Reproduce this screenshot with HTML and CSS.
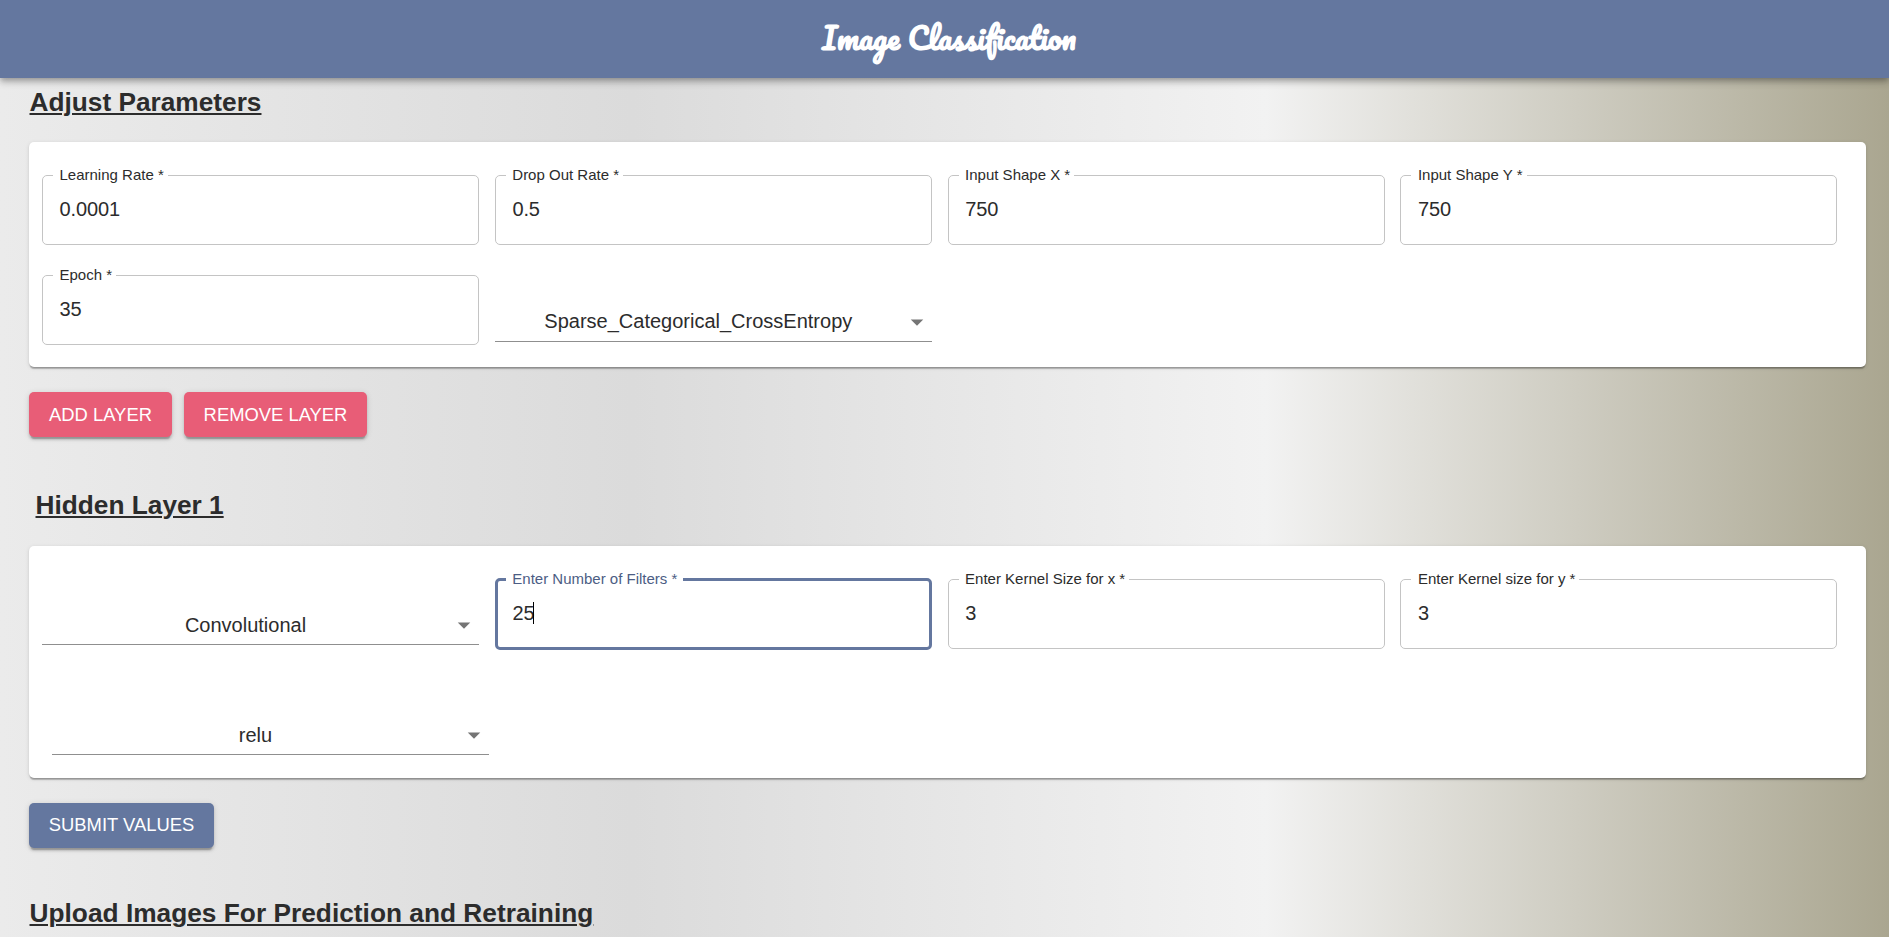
FILE: index.html
```html
<!DOCTYPE html>
<html lang="en">
<head>
<meta charset="utf-8">
<title>Image Classification</title>
<link rel="stylesheet" href="styles.css">
</head>
<body>
<header class="appbar"><h1 class="brand">Image Classification</h1></header>
<main class="page">
  <h2 class="heading">Adjust Parameters</h2>
  <section class="card card-params">
    <fieldset class="field"><legend>Learning Rate&nbsp;*</legend><div class="value">0.0001</div></fieldset>
    <fieldset class="field"><legend>Drop Out Rate&nbsp;*</legend><div class="value">0.5</div></fieldset>
    <fieldset class="field"><legend>Input Shape X&nbsp;*</legend><div class="value">750</div></fieldset>
    <fieldset class="field"><legend>Input Shape Y&nbsp;*</legend><div class="value">750</div></fieldset>
    <fieldset class="field"><legend>Epoch&nbsp;*</legend><div class="value">35</div></fieldset>
    <div class="select select-loss"><span class="choice">Sparse_Categorical_CrossEntropy</span><svg class="arrow" viewBox="0 0 24 24"><path d="M7 10l5 5 5-5z"/></svg></div>
  </section>
  <div class="actions">
    <button class="btn btn-pink">ADD LAYER</button>
    <button class="btn btn-pink btn-remove">REMOVE LAYER</button>
  </div>
  <h2 class="heading heading-layer">Hidden Layer 1</h2>
  <section class="card card-layer">
    <div class="select select-type"><span class="choice">Convolutional</span><svg class="arrow" viewBox="0 0 24 24"><path d="M7 10l5 5 5-5z"/></svg></div>
    <fieldset class="field focused"><legend>Enter Number of Filters&nbsp;*</legend><div class="value">25<span class="caret"></span></div></fieldset>
    <fieldset class="field"><legend>Enter Kernel Size for x&nbsp;*</legend><div class="value">3</div></fieldset>
    <fieldset class="field"><legend>Enter Kernel size for y&nbsp;*</legend><div class="value">3</div></fieldset>
    <div class="select select-activation"><span class="choice">relu</span><svg class="arrow" viewBox="0 0 24 24"><path d="M7 10l5 5 5-5z"/></svg></div>
  </section>
  <div class="actions">
    <button class="btn btn-blue">SUBMIT VALUES</button>
  </div>
  <h2 class="heading heading-upload">Upload Images For Prediction and Retraining</h2>
</main>
</body>
</html>
```

FILE: styles.css
```css
* { box-sizing: border-box; }

body {
  margin: 0;
  height: 937px;
  overflow: hidden;
  font-family: "Liberation Sans", Arial, sans-serif;
  color: #2c2c2c;
  background: linear-gradient(to right, #ebebeb 0%, #dbdbdb 33.5%, #f2f2f2 67%, #aaa690 100%);
}

.appbar {
  position: relative;
  height: 78px;
  display: flex;
  justify-content: center;
  background: #64779f;
  box-shadow: 0 2.5px 5px -1px rgba(0,0,0,.2), 0 5px 6px rgba(0,0,0,.14), 0 1px 12px rgba(0,0,0,.12);
}

.brand {
  margin: 0;
  padding-left: 9px;
  font: 700 30px/76px Pacifico, cursive;
  white-space: nowrap;
  color: #fff;
}

.page { padding: 0 23px 0 29px; }

.heading {
  margin: 0;
  height: 64px;
  padding: 9px 0 0 .5px;
  font-size: 26.25px;
  line-height: 30px;
  font-weight: 700;
  text-decoration: underline;
  text-decoration-thickness: 2px;
  text-underline-offset: 2px;
}

.card {
  display: grid;
  grid-template-columns: repeat(4, 437px);
  column-gap: 15.8px;
  align-content: start;
  padding: 25px 0 0 13px;
  background: #fff;
  border-radius: 5px;
  box-shadow: 0 2.5px 1px -1px rgba(0,0,0,.2), 0 1px 1px rgba(0,0,0,.14), 0 1px 4px rgba(0,0,0,.12);
}

.card-params { height: 225px; grid-auto-rows: 100px; }
.card-layer { height: 232px; grid-auto-rows: 110px; }

.field {
  min-width: 0;
  height: 78px;
  margin: 0;
  padding: 0 0 0 10px;
  border: 1px solid #c4c4c4;
  border-radius: 5px;
}

.field legend {
  padding: 0 4px 0 6.5px;
  font-size: 15px;
  line-height: 16px;
}

.value {
  display: flex;
  align-items: center;
  height: 22px;
  margin-top: 15px;
  padding-left: 6.6px;
  font-size: 20px;
  line-height: 22px;
  letter-spacing: -.12px;
}

.focused {
  height: 79px;
  padding-left: 8px;
  border: 3px solid #64779f;
}
.focused legend { padding-right: 6px; color: #4c5d84; }
.caret { width: 1px; height: 22px; margin-left: -1.5px; background: #000; }

.select {
  display: flex;
  align-items: center;
  height: 40px;
  border-bottom: 1px solid #8f8f8f;
}
.choice { flex: 1; text-align: center; font-size: 20px; line-height: 24px; }
.arrow { width: 30px; height: 30px; fill: #757575; }
.select-loss { margin-top: 35px; }
.select-loss .choice { padding-bottom: 1px; }
.select-type { margin-top: 34px; padding-top: 1px; }
.select-activation { margin: 34px -10px 0 10px; padding-top: 1px; }

.actions { display: flex; gap: 12px; margin-top: 25px; }

.btn {
  height: 45px;
  width: 143px;
  padding: 0;
  border: 0;
  border-radius: 5px;
  color: #fff;
  font: 18.4px/45px "Liberation Sans", Arial, sans-serif;
  white-space: nowrap;
  box-shadow: 0 3.5px 1px -2px rgba(0,0,0,.2), 0 2.5px 2.5px rgba(0,0,0,.14), 0 1px 6px rgba(0,0,0,.12);
}
.btn-pink { background: #e85d77; }
.btn-remove { width: 183px; }
.btn-blue { width: 185px; padding-bottom: 1px; line-height: 44px; background: #64779f; }

.heading-layer { height: 109px; padding: 53px 0 0 6.5px; }
.heading-upload { padding-top: 50px; letter-spacing: .02px; }
```
